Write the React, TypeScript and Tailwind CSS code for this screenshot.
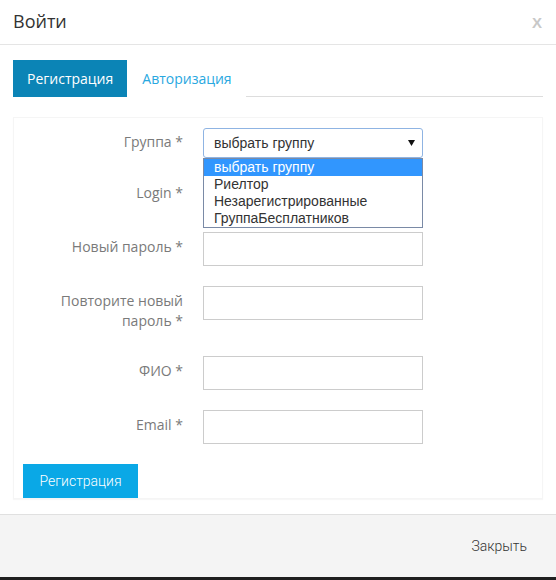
import React from "react";

const openSans = { fontFamily: '"Open Sans", "Liberation Sans", sans-serif' };

const options = ["выбрать группу", "Риелтор", "Незарегистрированные", "ГруппаБесплатников"];

const FormRow = ({ label, tall, children }: { label: React.ReactNode; tall?: boolean; children?: React.ReactNode }) => (
  <div className={`flex mb-[20px] ${tall ? "h-[50px]" : "h-[34px]"}`}>
    <label className="w-[160px] pr-0 text-right text-[14px] leading-[20px] pt-[5px] text-[#7a7a7a]">{label}</label>
    <div className="ml-[20px] w-[220px]">{children}</div>
  </div>
);

const TextInput = () => <div className="h-[34px] w-[220px] border border-[#ccc] bg-white" />;

export default function App() {
  return (
    <div className="w-[556px] h-[580px] bg-[#1f1f1f] flex flex-col" style={openSans}>
      <div className="h-[577px] bg-white flex flex-col">
        {/* header */}
        <div className="h-[45px] border-b border-[#e5e5e5] flex items-center justify-between pl-[13px] pr-[14px]">
          <h4 className="text-[18px] text-[#333] leading-none -mt-[2px]">Войти</h4>
          <span className="text-[15px] font-bold text-[#c8c8c8] leading-none" style={{ fontFamily: '"Liberation Sans", sans-serif' }}>
            X
          </span>
        </div>

        {/* body */}
        <div className="flex-1 px-[13px] pt-[15px]">
          <div className="flex items-end">
            <div className="h-[37px] px-[14px] bg-[#0b84b6] text-white text-[14px] flex items-center">Регистрация</div>
            <div className="h-[37px] pl-[15px] pr-[14px] text-[#29a8df] text-[14px] flex items-center">Авторизация</div>
            <div className="flex-1 border-b border-[#ddd]" />
          </div>

          <div className="mt-[20px] border border-[#f5f5f5] shadow-[0_1px_1px_rgba(0,0,0,0.03)] pl-[9px] pt-[10px]">
            <div className="flex mb-[20px] h-[30px]">
              <label className="w-[160px] text-right text-[14px] leading-[20px] pt-[4px] text-[#7a7a7a]">Группа *</label>
              <div className="ml-[20px] w-[220px] relative">
                <div
                  className="h-[30px] w-[220px] border border-[#8fb4e3] rounded-[3px] bg-white flex items-center justify-between pl-[10px] pr-[7px] text-[14px] text-[#333]"
                  style={{ fontFamily: '"Liberation Sans", Arial, sans-serif' }}
                >
                  <span>выбрать группу</span>
                  <svg width="7" height="6" viewBox="0 0 7 6">
                    <path d="M0 0h7L3.5 6z" fill="#111" />
                  </svg>
                </div>
                <ul
                  className="absolute left-0 top-[30px] z-10 w-[220px] border border-[#7a8aa6] bg-white text-[14px] text-[#333]"
                  style={{ fontFamily: '"Liberation Sans", Arial, sans-serif' }}
                >
                  {options.map((o, i) => (
                    <li
                      key={o}
                      className={`h-[17px] leading-[17px] pl-[10px] ${i === 0 ? "bg-[#3196fe] text-white" : ""}`}
                    >
                      {o}
                    </li>
                  ))}
                </ul>
              </div>
            </div>

            <FormRow label="Login *">
              <TextInput />
            </FormRow>
            <FormRow label="Новый пароль *">
              <TextInput />
            </FormRow>
            <FormRow
              tall
              label={
                <>
                  Повторите новый
                  <br />
                  пароль *
                </>
              }
            >
              <TextInput />
            </FormRow>
            <FormRow label="ФИО *">
              <TextInput />
            </FormRow>
            <FormRow label="Email *">
              <TextInput />
            </FormRow>

            <button
              type="button"
              className="h-[34px] w-[115px] bg-[#0aa8e6] text-white text-[14px]"
              style={{ fontFamily: 'Roboto, "Liberation Sans", sans-serif', fontWeight: 300 }}
            >
              Регистрация
            </button>
          </div>
        </div>

        {/* footer */}
        <div className="h-[63px] border-t border-[#e0e0e0] bg-[#f4f4f4] flex items-center justify-end pr-[29px]">
          <button
            type="button"
            className="text-[14px] text-[#333]"
            style={{ fontFamily: 'Roboto, "Liberation Sans", sans-serif', fontWeight: 300 }}
          >
            Закрыть
          </button>
        </div>
      </div>
    </div>
  );
}
